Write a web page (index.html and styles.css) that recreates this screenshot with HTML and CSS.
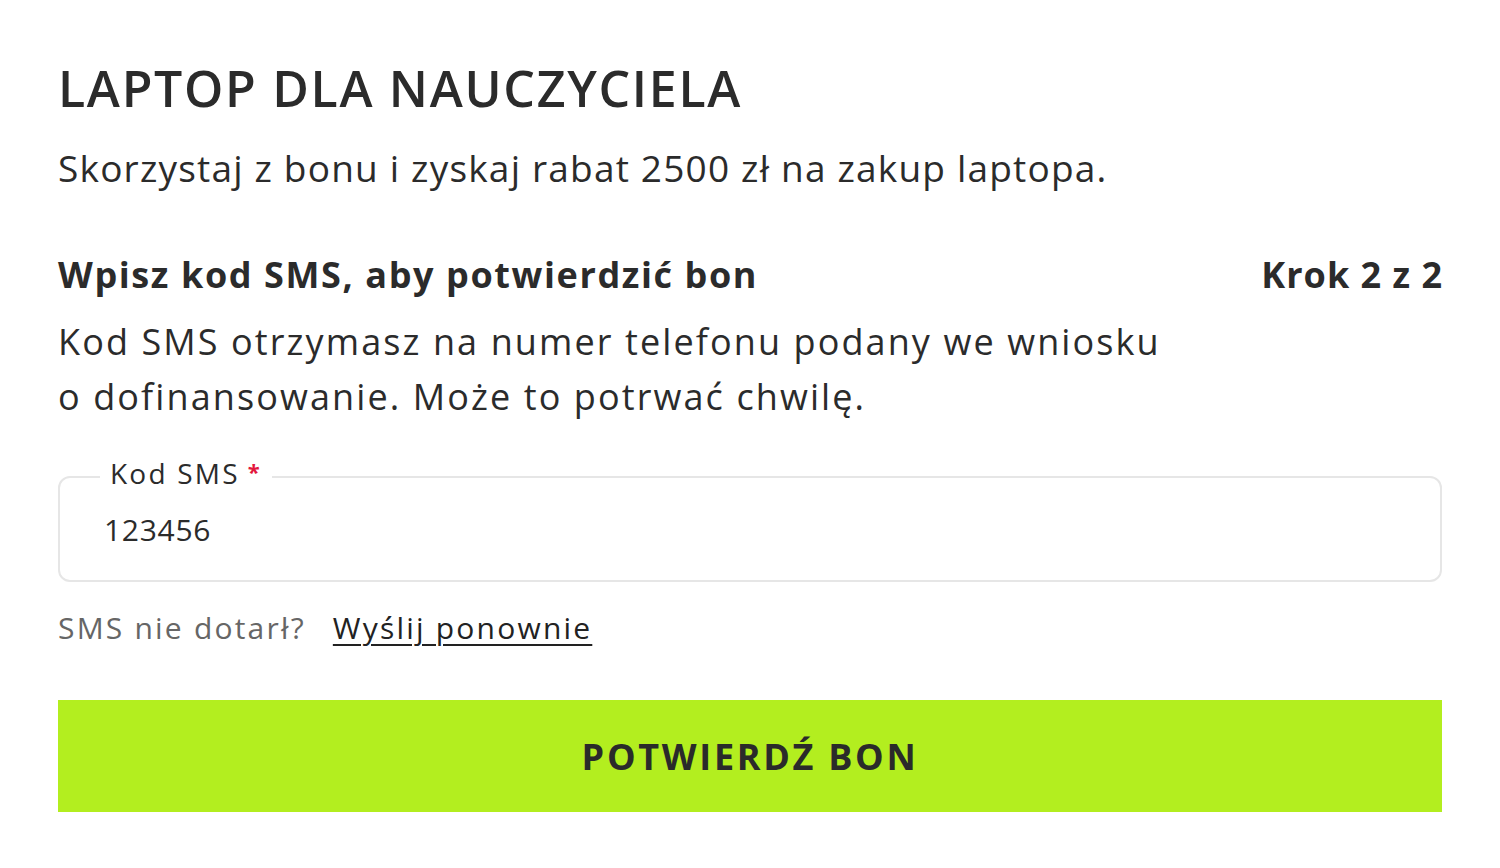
FILE: index.html
```html
<!DOCTYPE html>
<html lang="pl">
<head>
<meta charset="utf-8">
<title>Laptop dla nauczyciela</title>
<link rel="stylesheet" href="styles.css">
</head>
<body>
<main class="card">
  <h1 class="title">LAPTOP DLA NAUCZYCIELA</h1>
  <p class="lead">Skorzystaj z bonu i zyskaj rabat 2500 zł na zakup laptopa.</p>
  <div class="step-head">
    <h2 class="step-title">Wpisz kod SMS, aby potwierdzić bon</h2>
    <span class="step-count">Krok 2 z 2</span>
  </div>
  <p class="info">Kod SMS otrzymasz na numer telefonu podany we wniosku<br>o dofinansowanie. Może to potrwać chwilę.</p>
  <fieldset class="field">
    <legend class="field-label">Kod SMS<span class="req">*</span></legend>
    <input class="field-input" type="text" value="123456">
  </fieldset>
  <div class="resend">
    <span class="resend-q">SMS nie dotarł?</span>
    <a class="resend-link" href="#">Wyślij ponownie</a>
  </div>
  <button class="submit" type="button">POTWIERDŹ BON</button>
</main>
</body>
</html>
```
FILE: styles.css
```css
* { box-sizing: border-box; }
html, body { margin: 0; padding: 0; background: #fff; }
body {
  font-family: "Open Sans", "DejaVu Sans", sans-serif;
  color: #2b2b2b;
}
.card {
  padding: 56px 58px 0 58px;
  display: flex;
  flex-direction: column;
}
.title {
  margin: 0;
  font-size: 50px;
  line-height: 64px;
  font-weight: 600;
  letter-spacing: 1.7px;
}
.lead {
  margin: 24px 0 0;
  font-size: 37px;
  line-height: 48px;
  font-weight: 400;
  letter-spacing: 1.2px;
}
.step-head {
  margin-top: 59px;
  display: flex;
  justify-content: space-between;
  align-items: baseline;
}
.step-title, .step-count {
  margin: 0;
  font-size: 36px;
  line-height: 48px;
  font-weight: 700;
  letter-spacing: 1.6px;
}
.step-count { letter-spacing: 1px; margin-right: -1px; }
.info {
  margin: 15px 0 0;
  font-size: 36px;
  line-height: 55px;
  letter-spacing: 2.1px;
}
.field {
  margin: 38px 0 0;
  padding: 0 44px 22px;
  border: 2px solid #e6e6e6;
  border-radius: 12px;
  height: 120px;
}
.field-label {
  padding: 0 10px;
  margin-left: -4px;
  font-size: 28px;
  line-height: 30px;
  height: 30px;
  color: #2b2b2b;
  letter-spacing: 2.2px;
  transform: translateY(-4px);
}
.req {
  color: #e3173e;
  font-size: 22px;
  font-weight: 700;
  line-height: 0;
  margin-left: 8px;
  vertical-align: 4px;
}
.field-input {
  border: 0;
  outline: 0;
  padding: 0;
  margin-top: 18px;
  width: 100%;
  font-family: inherit;
  font-size: 30px;
  line-height: 40px;
  color: #2b2b2b;
  background: transparent;
  letter-spacing: 0.7px;
}
.resend {
  margin-top: 26px;
  display: flex;
  gap: 27px;
  font-size: 30px;
  line-height: 40px;
  letter-spacing: 2.2px;
}
.resend-q { color: #666; }
.resend-link { color: #222; text-decoration: underline; text-underline-offset: 5px; text-decoration-thickness: 2px; }
.submit {
  margin-top: 52px;
  height: 112px;
  border: 0;
  background: #b3ee1f;
  color: #2a2a2a;
  font-family: inherit;
  font-size: 36px;
  font-weight: 700;
  letter-spacing: 2.7px;
}
```
